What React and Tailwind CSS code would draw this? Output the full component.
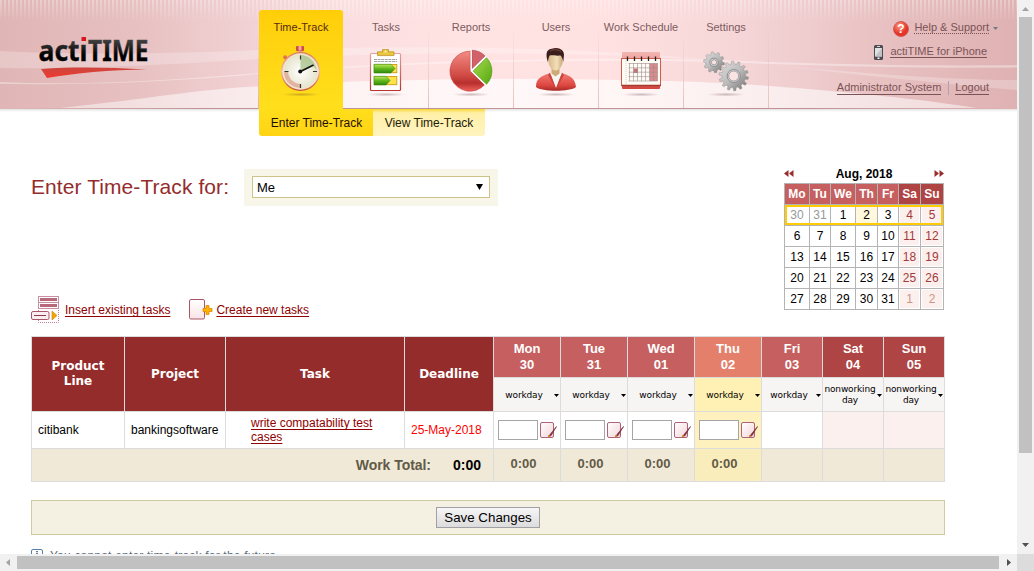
import React from "react";

const sans = "font-['Liberation_Sans',Arial,sans-serif]";
const wide = "font-['DejaVu_Sans',Verdana,sans-serif]";

function HeaderBackdrop() {
  return (
    <svg className="absolute inset-0" width="1017" height="109" viewBox="0 0 1017 109" aria-hidden="true">
      <defs>
        <linearGradient id="hb" x1="0" x2="1" y1="0" y2="0">
          <stop offset="0" stopColor="#e0b5b5" />
          <stop offset=".13" stopColor="#e7c0c1" />
          <stop offset=".25" stopColor="#f2d2d4" />
          <stop offset=".34" stopColor="#fbdfe0" />
          <stop offset=".45" stopColor="#ffe3e3" />
          <stop offset=".6" stopColor="#ffe1e1" />
          <stop offset=".7" stopColor="#f8d9da" />
          <stop offset=".78" stopColor="#f0ced0" />
          <stop offset=".88" stopColor="#e7bfc0" />
          <stop offset="1" stopColor="#dfb1b2" />
        </linearGradient>
        <linearGradient id="fade" x1="0" x2="0" y1="0" y2="1">
          <stop offset="0" stopColor="#fff" />
          <stop offset="1" stopColor="#000" />
        </linearGradient>
        <linearGradient id="hill" x1="0" x2="1" y1="0" y2="0">
          <stop offset="0" stopColor="#fff" stopOpacity=".45" />
          <stop offset=".5" stopColor="#fff" stopOpacity=".75" />
          <stop offset="1" stopColor="#fff" stopOpacity=".5" />
        </linearGradient>
        <linearGradient id="edge" x1="0" x2="1" y1="0" y2="0">
          <stop offset="0" stopColor="#b98c8e" stopOpacity="0" />
          <stop offset=".2" stopColor="#b98c8e" stopOpacity=".9" />
          <stop offset=".8" stopColor="#b98c8e" stopOpacity=".9" />
          <stop offset="1" stopColor="#b98c8e" stopOpacity="0" />
        </linearGradient>
        <pattern id="bars" width="4" height="22" patternUnits="userSpaceOnUse">
          <rect width="2" height="22" fill="#fff" opacity=".32" />
        </pattern>
        <mask id="fm"><rect width="1017" height="22" fill="url(#fade)" /></mask>
      </defs>
      <rect width="1017" height="109" fill="url(#hb)" />
      <rect width="1017" height="22" fill="url(#bars)" mask="url(#fm)" />
      <path d="M0 51C90 55 170 54 258 50C500 42 640 52 770 65C860 73 950 80 1017 80V90C900 80 820 70 770 65C640 52 420 50 258 59C150 66 60 69 0 68Z" fill="#fff" opacity=".24" />
      <path d="M0 82C100 86 180 79 258 73C430 58 640 56 770 62C860 65 950 66 1017 65V67.500C950 68.500 860 67 770 64C640 58 430 60 258 74C180 81 100 85 0 84Z" fill="#fff" opacity=".36" />
      <path d="M60 108C150 99 200 89 258 86.500C380 77 640 76 770 86C850 92 920 99 976 108Z" fill="url(#hill)" />
      <rect x="0" y="108" width="1017" height="1" fill="url(#edge)" />
    </svg>
  );
}

function Logo() {
  return (
    <svg className="ml-[36px] mt-[20px] shrink-0" width="122" height="62" viewBox="36 20 122 62" role="img">
      <defs>
        <linearGradient id="lt" x1="0" x2="0" y1="38" y2="61" gradientUnits="userSpaceOnUse">
          <stop offset="0" stopColor="#4a4a4a" />
          <stop offset=".75" stopColor="#000" />
        </linearGradient>
        <linearGradient id="sw" x1="0" x2="0" y1="67" y2="78" gradientUnits="userSpaceOnUse">
          <stop offset="0" stopColor="#c9473f" />
          <stop offset="1" stopColor="#f03a30" />
        </linearGradient>
      </defs>
      <g fontFamily="'Noto Sans','Open Sans',sans-serif" fontWeight="700" fontSize="29" fill="url(#lt)" stroke="url(#lt)" strokeWidth=".35">
        <text x="38.500" y="60.500" textLength="49" lengthAdjust="spacingAndGlyphs">actı</text>
        <text x="88" y="60.500" textLength="60.500" lengthAdjust="spacingAndGlyphs">TIME</text>
      </g>
      <rect x="81.500" y="37" width="4.500" height="4" fill="#d8161f" />
      <path d="M41 69C75 66.500 110 67.500 147 69.500C110 70 75 73 47 78Z" fill="url(#sw)" />
    </svg>
  );
}

function Shadow() {
  return (
    <>
      <radialGradient id="sh"><stop offset="0" stopColor="#5b3030" stopOpacity=".3" /><stop offset="1" stopColor="#5b3030" stopOpacity="0" /></radialGradient>
      <ellipse cx="42" cy="94.500" rx="19" ry="2" fill="url(#sh)" />
    </>
  );
}

function TabIcon({ children }) {
  return (
    <svg width="84" height="60" viewBox="0 40 84 60" aria-hidden="true">
      <Shadow />
      {children}
    </svg>
  );
}

function WatchIcon() {
  return (
    <TabIcon>
      <linearGradient id="wr" x1="0" x2="0" y1="0" y2="1"><stop offset="0" stopColor="#d97a62" /><stop offset=".5" stopColor="#f3b9a2" /><stop offset="1" stopColor="#c9503c" /></linearGradient>
      <radialGradient id="wf" cx=".5" cy=".5"><stop offset="0" stopColor="#fff" /><stop offset="1" stopColor="#e6e4cc" /></radialGradient>
      <rect x="39" y="50" width="4.500" height="4" fill="#e7a084" />
      <rect x="37" y="46" width="8" height="5" rx="1" fill="#cf4a40" />
      <rect x="39.500" y="46" width="3" height="4.500" fill="#f5a79b" />
      <circle cx="26.200" cy="57.300" r="2" fill="#e27055" />
      <circle cx="41.500" cy="71.500" r="19.500" fill="url(#wr)" />
      <circle cx="41.500" cy="71.500" r="18.200" fill="#f6e3c9" />
      <circle cx="41.500" cy="71.500" r="17" fill="url(#wf)" />
      <path d="M41.500 71.500V55A16.500 16.500 0 0 1 57.500 70L53.500 65.500Z" fill="#9fbd83" opacity=".7" />
      <path d="M25 72A16.500 16.500 0 0 0 41.500 88V84C33 83 30 78 29 72Z" fill="#df9c8c" opacity=".7" />
      <path d="M41.500 55.500v4M41.500 84v4M25.500 71.500h4M54 71.500h4" stroke="#333" strokeWidth="1.200" />
      <path d="M41.500 71.500L54.500 65" stroke="#111" strokeWidth="1.600" />
      <circle cx="41.200" cy="71.500" r="2" fill="#111" />
    </TabIcon>
  );
}

function TasksIcon() {
  return (
    <TabIcon>
      <linearGradient id="cb" x1="0" x2="0" y1="0" y2="1"><stop offset="0" stopColor="#e4a0a0" /><stop offset="1" stopColor="#b9352f" /></linearGradient>
      <linearGradient id="gr" x1="0" x2="0" y1="0" y2="1"><stop offset="0" stopColor="#c0ea5e" /><stop offset=".5" stopColor="#63b81e" /><stop offset="1" stopColor="#2f8a0c" /></linearGradient>
      <rect x="26.500" y="53.500" width="30" height="37" rx="1" fill="#fff" stroke="url(#cb)" strokeWidth="1.200" />
      <path d="M33.500 51.800h5v-2.200h6v2.200h5.500v3.800h-16.500z" fill="#ecc63e" stroke="#bd932a" strokeWidth=".8" />
      <rect x="40.500" y="50.500" width="2" height="2" fill="#fff2b0" />
      <path d="M30 59.500h23M30 61.500h23" stroke="#8d8d8d" strokeWidth=".8" strokeDasharray="3 .6" />
      <rect x="30.300" y="64.500" width="22.500" height="8.200" fill="#ffe34a" stroke="#cf9a14" strokeWidth=".9" />
      <path d="M30 64.300h17l4 4.200-4 4.400h-17z" fill="url(#gr)" stroke="#34880c" strokeWidth=".6" />
      <rect x="30.300" y="76.500" width="22.500" height="8.200" fill="#ffe34a" stroke="#cf9a14" strokeWidth=".9" />
      <path d="M30 76.300h12l4 4.200-4 4.400h-12z" fill="url(#gr)" stroke="#34880c" strokeWidth=".6" />
    </TabIcon>
  );
}

function ReportsIcon() {
  return (
    <TabIcon>
      <linearGradient id="pr" x1="0" x2="0" y1="0" y2="1"><stop offset="0" stopColor="#f38a84" /><stop offset=".6" stopColor="#d14b45" /><stop offset=".8" stopColor="#b82f2d" /><stop offset="1" stopColor="#f0625c" /></linearGradient>
      <linearGradient id="pg" x1="0" x2="1" y1="0" y2="1"><stop offset="0" stopColor="#a9da4c" /><stop offset="1" stopColor="#54a711" /></linearGradient>
      <path d="M41.300 51.200A20 20 0 1 0 55.600 84.800L41.300 71Z" fill="url(#pr)" stroke="#c43d3a" strokeWidth=".6" />
      <path d="M43 69V50.200A19 19 0 0 1 56 56Z" fill="#d2626a" stroke="#b64f57" strokeWidth=".7" />
      <path d="M44 71.300L57.500 57.800A19 19 0 0 1 57.500 84.300Z" fill="url(#pg)" stroke="#4c9b12" strokeWidth=".7" />
      <path d="M42.200 50.500V70.800L56.500 84.800M42.200 70.800L57 56.500" stroke="#fff" strokeWidth="1.200" fill="none" />
    </TabIcon>
  );
}

function UsersIcon() {
  return (
    <TabIcon>
      <linearGradient id="uj" x1="0" x2="0" y1="0" y2="1"><stop offset="0" stopColor="#f27a70" /><stop offset=".7" stopColor="#dc4640" /><stop offset="1" stopColor="#a62a26" /></linearGradient>
      <linearGradient id="uf" x1="0" x2="1" y1="0" y2="0"><stop offset="0" stopColor="#d8b98a" /><stop offset=".6" stopColor="#f2dfb9" /><stop offset="1" stopColor="#c9a875" /></linearGradient>
      <path d="M22 87C22 79 26 76.500 35 73.500L42 80L49 73.500C58 76.500 61 79 62 87C56 92 28 92 22 87Z" fill="url(#uj)" />
      <path d="M36 72.500L42 88L48 72.500L42 75Z" fill="#f6f5f2" />
      <path d="M36 72.500L34 75L42 89ZM48 72.500L50 75L42 89Z" fill="#c9453e" />
      <path d="M37.500 66h8v7.500l-4 3-4-3z" fill="#cdab77" />
      <ellipse cx="41.500" cy="60.500" rx="7.300" ry="10" fill="url(#uf)" />
      <path d="M33.800 62C31 53 33 49 38 48.800C43 46.500 51 49 49.900 56L49.300 62C48.500 59 48 56.500 46.500 55.500C42 56 38 55 35.800 55.500C34.500 57 34.500 60 33.800 62Z" fill="#3b1d1b" />
      <path d="M36 51C39 49 44 49.500 47 51.500" stroke="#7a4b45" strokeWidth="1" fill="none" />
    </TabIcon>
  );
}

function ScheduleIcon() {
  return (
    <TabIcon>
      <linearGradient id="sc" x1="0" x2="0" y1="0" y2="1"><stop offset="0" stopColor="#f2b7b3" /><stop offset="1" stopColor="#d2453e" /></linearGradient>
      <rect x="23" y="52" width="38" height="37" rx="1" fill="url(#sc)" />
      <rect x="22.500" y="58.500" width="39" height="27" fill="#fdfbf3" stroke="#cf5a4e" strokeWidth="1" />
      <path d="M22.500 85.500h39.500" stroke="#a63a30" strokeWidth="1.300" />
      <path d="M27 59v26" stroke="#d6d0bf" strokeWidth="1" strokeDasharray="1 1" />
      <rect x="50.500" y="63.500" width="8" height="17.500" fill="#d98a8c" />
      <rect x="34.500" y="68.500" width="4.500" height="4.500" fill="#c77478" />
      <path d="M29.500 63.500h29M29.500 67.800h29M29.500 72.200h29M29.500 76.600h29M29.500 81h29M30.500 63v18M34.500 63v18M38.500 63v18M42.500 63v18M46.500 63v18M50.500 63v18M54.500 63v18M58.500 63v18" stroke="#a08e8e" strokeWidth=".6" />
      <path d="M28.500 56.500v4.500M35.500 56.500v4.500M42.500 56.500v4.500M49.500 56.500v4.500M56.500 56.500v4.500" stroke="#222" strokeWidth="1.300" />
    </TabIcon>
  );
}

function Gear({ cx, cy, r, teeth, hole }) {
  const pts = [];
  for (let i = 0; i < teeth; i++) {
    [[-0.3, 0.8], [-0.17, 1], [0.17, 1], [0.3, 0.8]].forEach(([o, k]) => {
      const a = ((i + o) / teeth) * Math.PI * 2 + 0.15;
      pts.push(`${(cx + Math.cos(a) * r * k).toFixed(2)},${(cy + Math.sin(a) * r * k).toFixed(2)}`);
    });
  }
  return (
    <g>
      <polygon points={pts.join(" ")} fill="url(#gg)" stroke="#858585" strokeWidth=".4" />
      <circle cx={cx} cy={cy} r={hole + 1.5} fill="#d9d9d9" stroke="#7f7f7f" strokeWidth=".8" />
      <circle cx={cx} cy={cy} r={hole} fill="#f9e4e3" stroke="#858585" strokeWidth=".7" />
    </g>
  );
}

function SettingsIcon() {
  return (
    <TabIcon>
      <linearGradient id="gg" x1="0" x2="1" y1="0" y2="1"><stop offset="0" stopColor="#dedede" /><stop offset=".5" stopColor="#bcbcbc" /><stop offset="1" stopColor="#6f6f6f" /></linearGradient>
      <Gear cx={30} cy={62.300} r={10.500} teeth={10} hole={2.600} />
      <Gear cx={49.700} cy={76} r={14.800} teeth={14} hole={5} />
    </TabIcon>
  );
}

const tabs = [
  ["Time-Track", WatchIcon],
  ["Tasks", TasksIcon],
  ["Reports", ReportsIcon],
  ["Users", UsersIcon],
  ["Work Schedule", ScheduleIcon],
  ["Settings", SettingsIcon],
];

function Nav() {
  return (
    <nav className="flex h-[109px] bg-[linear-gradient(to_bottom,transparent_30%,#dcb3b5)] bg-[length:1px_100%] bg-left bg-no-repeat pt-[10px] pl-px">
      {tabs.map(([name, Icon], i) => (
        <div
          key={name}
          className={
            i === 0
              ? "mr-px flex h-[99px] w-[84px] flex-col items-center rounded-t-[3px] bg-gradient-to-b from-[#ffce08] to-[#ffdf1c] text-[#5a2a10]"
              : "flex h-[98px] w-[85px] flex-col items-start bg-[linear-gradient(to_bottom,transparent_15%,#e6c0be)] bg-[length:1px_100%] bg-right bg-no-repeat text-[#7d5b5f]"
          }
        >
          <span className="mt-[11px] h-[13px] w-[84px] text-center text-[11px] leading-[13px] whitespace-nowrap">{name}</span>
          <span className="mt-[6px] block h-[60px] w-[84px]"><Icon /></span>
        </div>
      ))}
    </nav>
  );
}

function Account() {
  return (
    <div className="mr-[28px] ml-auto flex flex-col items-end text-[11px] leading-[13px] text-[#7a5356]">
      <div className="mt-[20px] -mr-[9px] flex h-[16px] items-start">
        <svg className="mt-px mr-[5px]" width="16" height="16" viewBox="0 0 16 16">
          <radialGradient id="hp" cx=".4" cy=".3"><stop offset="0" stopColor="#ff9a80" /><stop offset="1" stopColor="#e5352a" /></radialGradient>
          <circle cx="8" cy="8" r="7.500" fill="url(#hp)" stroke="#c9534a" strokeWidth=".8" />
          <text x="8" y="12.200" textAnchor="middle" fontSize="12" fontWeight="700" fill="#fff">?</text>
        </svg>
        <span className="h-[14px] border-b border-dotted border-[#7a5356] leading-[15px]">Help &amp; Support</span>
        <svg className="mt-[7px] ml-[4px]" width="5" height="3"><path d="M0 0h5L2.500 3z" fill="#6d7c88" /></svg>
      </div>
      <div className="mt-[8px] mr-[2px] flex h-[16px] items-start">
        <svg className="mt-px mr-[7px]" width="9" height="15" viewBox="0 0 9 15">
          <rect width="9" height="15" rx="1.500" fill="#4c4c50" />
          <rect x="1" y="3" width="7" height="8.500" fill="#dfe1e3" />
          <path d="M1 11.500L8 3v8.500z" fill="#bfc3c6" />
          <path d="M3 1.500h3" stroke="#ddd" /><rect x="3.500" y="12.500" width="2" height="1.500" fill="#fff" />
        </svg>
        <span className="h-[14px] border-b border-[#7a5356] leading-[15px]">actiTIME for iPhone</span>
      </div>
      <div className="mt-[21px] flex h-[14px] items-start">
        <span className="border-b border-[#7a5356]">Administrator System</span>
        <span className="mr-[6px] ml-[7px] h-[14px] w-px bg-[#a9a3ab]" />
        <span className="border-b border-[#7a5356]">Logout</span>
      </div>
    </div>
  );
}

function SubMenu() {
  return (
    <div className="flex h-[27px] bg-gradient-to-b from-[#e3e3e3] to-[#ffffff] bg-[length:100%_3px] bg-no-repeat pl-[259px] text-[12px] leading-[29px]">
      <div className="w-[114px] rounded-bl-[3px] bg-gradient-to-b from-[#ffde1b] to-[#ffd414] pl-px text-center text-[#1f0d00]">Enter Time-Track</div>
      <div className="w-[112px] rounded-br-[3px] bg-gradient-to-b from-[#f7d61e] via-[#fff0a8] via-15% to-[#fff4bf] text-center text-[#241a08]">View Time-Track</div>
    </div>
  );
}

const weeks = [
  [30, 31, 1, 2, 3, 4, 5],
  [6, 7, 8, 9, 10, 11, 12],
  [13, 14, 15, 16, 17, 18, 19],
  [20, 21, 22, 23, 24, 25, 26],
  [27, 28, 29, 30, 31, 1, 2],
];

function dayClass(w, d) {
  if (d > 4) return w === 4 ? "border border-white bg-[#fbf0ee] leading-[19px] text-[#cf9486]" : "border border-white bg-[#fbf0ee] leading-[19px] text-[#a33a3a]";
  if (w === 0 && d < 2) return "bg-white leading-[21px] text-[#999]";
  if (w === 0 && d === 3) return "bg-[#fff8dc] leading-[21px] text-black";
  return "bg-white leading-[21px] text-black";
}

function MiniCalendar() {
  return (
    <div className="w-[160px] text-[12px]">
      <div className="flex h-[17px] items-center justify-between leading-[17px] font-bold">
        <svg className="-mt-[2px]" width="10" height="7"><path d="M4.500 0v7L0 3.500zM9.500 0v7L5 3.500z" fill="#9c2b2b" /></svg>
        <span>Aug, 2018</span>
        <svg className="-mt-[2px]" width="10" height="7"><path d="M.5 0v7L5 3.500zM5.500 0v7L10 3.500z" fill="#9c2b2b" /></svg>
      </div>
      <div className="relative grid auto-rows-[20px] grid-cols-[24px_20px_24px_21px_20px_21px_22px] gap-px bg-[#b4b4b4] p-px text-center">
        {["Mo", "Tu", "We", "Th", "Fr", "Sa", "Su"].map((d, i) => (
          <div key={d} className={i > 4 ? "bg-[#af4444] leading-[21px] font-bold text-white" : "bg-[#c65f5f] leading-[21px] font-bold text-white"}>{d}</div>
        ))}
        {weeks.map((row, w) => row.map((n, d) => <div key={`${w}-${d}`} className={dayClass(w, d)}>{n}</div>))}
        <div className="absolute top-[22px] right-px left-px h-[20px] border-2 border-[#ffcb05]" />
      </div>
    </div>
  );
}

function TaskLinks() {
  return (
    <div className="flex h-[28px] items-start text-[12px] leading-[14px] text-[#900000]">
      <svg width="28" height="28" viewBox="0 0 28 28">
        <rect x="7.500" y=".5" width="20" height="6" fill="#fff" stroke="#c891a0" />
        <rect x="9" y="2" width="17" height="3" fill="#b86a7c" />
        <rect x="7.500" y="6.500" width="20" height="6" fill="#fff" stroke="#c891a0" />
        <rect x="9" y="8" width="17" height="3" fill="#b86a7c" />
        <path d="M7.500 14v12.500h20V13" fill="none" stroke="#c08090" strokeDasharray="1 1" />
        <rect x=".5" y="15.500" width="17.500" height="8" rx="1.500" fill="#fbeef0" stroke="#a9566a" />
        <path d="M3 19.500h12" stroke="#8d3a50" />
        <path d="M21 15l5 4.500-5 4.500z" fill="#f6a400" stroke="#cf8200" strokeWidth=".6" />
      </svg>
      <a className="mt-[7px] ml-[6px] underline underline-offset-[2px]">Insert existing tasks</a>
      <svg className="mt-[3px] ml-[19px]" width="24" height="22" viewBox="0 0 24 22">
        <linearGradient id="nt" x1="0" x2="0" y1="0" y2="1"><stop offset="0" stopColor="#fff" /><stop offset="1" stopColor="#f9e3e6" /></linearGradient>
        <rect x=".5" y=".5" width="15" height="19.500" rx="1.500" fill="url(#nt)" stroke="#a9566a" />
        <path d="M17 6.500h3v3h3v3h-3v3h-3v-3h-3v-3h3z" fill="#ffb000" stroke="#dd8c00" strokeWidth=".8" />
      </svg>
      <a className="mt-[7px] ml-[3px] underline underline-offset-[2px]">Create new tasks</a>
    </div>
  );
}

const days = [
  ["Mon", "30"], ["Tue", "31"], ["Wed", "01"], ["Thu", "02"], ["Fri", "03"], ["Sat", "04"], ["Sun", "05"],
];

function pick(i, weekday, today, weekend) {
  if (i === 3) return today;
  return i > 4 ? weekend : weekday;
}

function NoteIcon() {
  return (
    <svg className="ml-[2px]" width="18" height="18" viewBox="0 0 18 18">
      <linearGradient id="ni" x1="0" x2="1" y1="0" y2="1"><stop offset="0" stopColor="#fff" /><stop offset="1" stopColor="#f3d5da" /></linearGradient>
      <rect x=".5" y="1.500" width="13" height="15" rx="1.500" fill="url(#ni)" stroke="#ad6478" />
      <path d="M16.500 5.500L10 13.500l-1.500 2 2.500-.8z" fill="#7c2f40" stroke="#7c2f40" strokeWidth=".7" />
      <rect x="8" y="14" width="1.500" height="1.500" fill="#f0a000" />
    </svg>
  );
}

function TimeTable() {
  const head = `row-span-2 flex items-center justify-center bg-[#952c2c] text-center text-[12px] leading-[15px] font-bold text-white ${wide}`;
  return (
    <div className="grid w-[914px] grid-cols-[92px_100px_178px_88px_66px_66px_66px_66px_60px_60px_60px] grid-rows-[40px_33px_36px_32px] gap-px bg-[#dcdcdc] p-px">
      <div className={head}>Product<br />Line</div>
      <div className={head}>Project</div>
      <div className={head}>Task</div>
      <div className={head}>Deadline</div>
      {days.map(([d, n], i) => (
        <div key={d} className={`${pick(i, "bg-[#c65f5f]", "bg-[#e47f6b]", "bg-[#af4444]")} pt-[4px] text-center text-[13px] leading-[16px] font-bold text-white`}>
          {d}<br />{n}
        </div>
      ))}
      {days.map(([d], i) => (
        <div key={d} className={`${pick(i, "bg-[#f7f4f4]", "bg-[#fff1b3]", "bg-[#f7f4f4]")} relative flex items-center justify-center pt-px text-center text-[9px] leading-[11px] text-black ${wide}`}>
          <span className={i > 4 ? "mr-[6px] whitespace-nowrap tracking-[-0.150px]" : "mr-[6px] whitespace-nowrap tracking-[-0.150px]"}>{i > 4 ? <>nonworking<br />day</> : "workday"}</span>
          <svg className="absolute top-[16px] right-px" width="5" height="3"><path d="M0 0h5L2.500 3z" /></svg>
        </div>
      ))}
      <div className="bg-white pl-[6px] text-[12px] leading-[36px]">citibank</div>
      <div className="bg-white pl-[6px] text-[12px] leading-[36px]">bankingsoftware</div>
      <div className="bg-white pt-[4px] pl-[25px] text-[12px] leading-[14px] text-[#900000]">
        <span className="underline underline-offset-[2px]">write compatability test<br />cases</span>
      </div>
      <div className="bg-white pl-[6px] text-[12px] leading-[36px] text-[#f00]">25-May-2018</div>
      {days.map(([d], i) => (
        <div key={d} className={`${pick(i, "bg-white", "bg-[#fff1bd]", "bg-[#fbf0ee]")} flex items-center pl-[4px]`}>
          {i < 4 && <><span className="h-[20px] w-[40px] border border-[#a5a5a5] bg-white" /><NoteIcon /></>}
        </div>
      ))}
      <div className="col-span-4 flex items-center justify-end bg-[#f0e9d7] pr-[12px] text-[14px] font-bold">
        <span className="tracking-[-0.050px] text-[#625a48]">Work Total:</span>
        <span className="ml-[22px]">0:00</span>
      </div>
      {days.map(([d], i) => (
        <div key={d} className={`${pick(i, "bg-[#f0e9d7]", "bg-[#f9edbb]", "bg-[#f0e9d7]")} pr-[7px] text-center text-[13px] leading-[30px] font-bold text-[#625a48]`}>
          {i < 4 && "0:00"}
        </div>
      ))}
    </div>
  );
}

function Page() {
  return (
    <div className="h-[554px] w-[1017px] overflow-hidden bg-white">
      <header className="relative h-[109px]">
        <HeaderBackdrop />
        <div className="relative flex h-[109px]">
          <div className="w-[258px]"><div className="flex"><Logo /></div></div>
          <Nav />
          <Account />
        </div>
      </header>
      <SubMenu />
      <div className="flex h-[160px] pl-[31px]">
        <h1 className="mt-[39px] w-[213px] text-[21px] leading-[24px] tracking-[0.080px] whitespace-nowrap text-[#952c2c]">Enter Time-Track for:</h1>
        <div className="mt-[33px] h-[37px] w-[254px] bg-[#f8f6e9] px-[8px] pt-[7px]">
          <div className="flex h-[22px] items-center justify-between border border-[#cfc389] bg-white pr-[6px] pl-[4px] text-[13px]">
            <span className="pt-px">Me</span>
            <svg className="-mt-px" width="7" height="6"><path d="M0 0h7L3.500 6z" /></svg>
          </div>
        </div>
        <div className="mt-[30px] ml-[286px]"><MiniCalendar /></div>
      </div>
      <div className="pl-[31px]">
        <TaskLinks />
        <div className="mt-[12px]"><TimeTable /></div>
        <div className="mt-[18px] flex h-[35px] w-[914px] justify-center border border-[#cfcaa4] bg-[#f5f1e2] pt-[6px]">
          <button className="h-[21px] w-[104px] border border-[#a0a0a6] bg-gradient-to-b from-[#f6f6f6] to-[#dcdcdc] text-[13.330px] leading-[19px] whitespace-nowrap text-black">Save Changes</button>
        </div>
        <div className="mt-[14px] flex text-[12px] leading-[14px] text-[#5c6b7c]">
          <span className="mr-[7px] h-[12px] w-[12px] rounded-[2px] border border-[#5b7fa3] text-center text-[10px] leading-[11px] font-bold text-[#24486c]">i</span>
          <span className="tracking-[0.200px]">You cannot enter time-track for the future.</span>
        </div>
      </div>
    </div>
  );
}

export default function App() {
  return (
    <div className={`grid h-[571px] w-[1034px] grid-cols-[1017px_17px] grid-rows-[554px_17px] overflow-hidden bg-white text-black ${sans}`}>
      <Page />
      <div className="flex flex-col items-center bg-[#f1f1f1]">
        <svg className="mt-[7px]" width="7" height="4"><path d="M0 4h7L3.500 0z" fill="#a3a3a3" /></svg>
        <div className="mt-[6px] h-[436px] w-[13px] bg-[#c1c1c1]" />
        <svg className="mt-auto mb-[7px]" width="7" height="4"><path d="M0 0h7L3.500 4z" fill="#505050" /></svg>
      </div>
      <div className="flex items-center bg-[#f1f1f1]">
        <svg className="ml-[6px]" width="4" height="7"><path d="M4 0v7L0 3.500z" fill="#a3a3a3" /></svg>
        <div className="ml-[7px] h-[13px] w-[982px] bg-[#c1c1c1]" />
        <svg className="ml-[8px]" width="4" height="7"><path d="M0 0v7l4-3.500z" fill="#505050" /></svg>
      </div>
      <div className="bg-[#dcdcdc]" />
    </div>
  );
}
